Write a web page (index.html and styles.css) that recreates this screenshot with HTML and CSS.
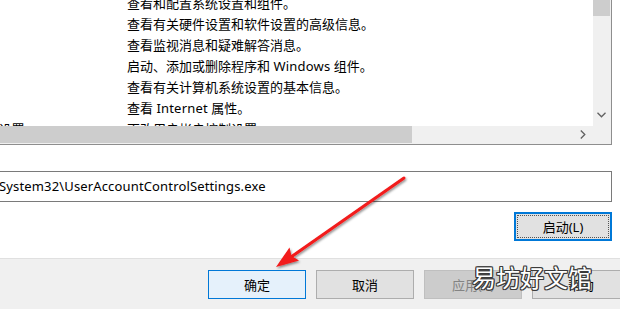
FILE: index.html
```html
<!DOCTYPE html>
<html lang="zh-CN">
<head>
<meta charset="utf-8">
<link rel="stylesheet" href="styles.css">
</head>
<body>
<div class="dialog">
  <div class="list">
    <div class="list-body">
      <div class="rows">
        <div class="row"><span class="c1"></span><span class="c2">查看和配置系统设置和组件。</span></div>
        <div class="row"><span class="c1"></span><span class="c2">查看有关硬件设置和软件设置的高级信息。</span></div>
        <div class="row"><span class="c1"></span><span class="c2">查看监视消息和疑难解答消息。</span></div>
        <div class="row"><span class="c1"></span><span class="c2">启动、添加或删除程序和 <span class="lat">Windows</span> 组件。</span></div>
        <div class="row"><span class="c1"></span><span class="c2">查看有关计算机系统设置的基本信息。</span></div>
        <div class="row"><span class="c1"></span><span class="c2">查看 <span class="lat">Internet</span> 属性。</span></div>
        <div class="row"><span class="c1"><span class="shift">更改 UAC 设置</span></span><span class="c2">更改用户帐户控制设置。</span></div>
      </div>
    </div>
    <div class="vscroll">
      <div class="vthumb"></div>
      <svg class="chev-down" width="9" height="6" viewBox="0 0 9 6"><polyline points="0.5,0.8 4.5,4.8 8.5,0.8" fill="none" stroke="#606060" stroke-width="1.3"/></svg>
    </div>
    <div class="hscroll">
      <div class="hthumb"></div>
      <svg class="chev-right" width="6" height="9" viewBox="0 0 6 9"><polyline points="0.8,0.5 4.8,4.5 0.8,8.5" fill="none" stroke="#606060" stroke-width="1.3"/></svg>
    </div>
    <div class="corner"></div>
  </div>

  <div class="command">System32\UserAccountControlSettings.exe</div>

  <div class="run-row">
    <button class="btn btn-focus"><span class="focus-ring">启动(L)</span></button>
  </div>

  <div class="footer">
    <button class="btn btn-default">确定</button>
    <button class="btn">取消</button>
    <button class="btn btn-disabled">应用(A)</button>
    <button class="btn btn-help">帮助</button>
  </div>

  <div class="watermark">易坊好文馆</div>

  <svg class="arrow" width="620" height="309" viewBox="0 0 620 309">
    <defs>
      <filter id="sh" x="-20%" y="-20%" width="140%" height="140%">
        <feDropShadow dx="1" dy="1.5" stdDeviation="1" flood-color="#000" flood-opacity="0.45"/>
      </filter>
    </defs>
    <g filter="url(#sh)">
      <line x1="404" y1="178" x2="291" y2="257" stroke="#f21a1a" stroke-width="3" stroke-linecap="round"/>
      <polygon points="276,267 289.5,247.5 291.5,256 299,260.5" fill="#f21a1a"/>
    </g>
  </svg>
</div>
</body>
</html>
```

FILE: styles.css
```css
html, body {
  margin: 0;
  padding: 0;
  background: #ffffff;
}

body {
  width: 620px;
  height: 309px;
  overflow: hidden;
  font-family: "Noto Sans", "Noto Sans CJK SC", sans-serif;
  font-size: 13px;
  color: #000;
}

.dialog {
  position: relative;
  width: 620px;
  height: 309px;
  display: flex;
  flex-direction: column;
}

.list {
  width: 611px;
  height: 144px;
  border-right: 1px solid #8e8e8e;
  border-bottom: 1px solid #8e8e8e;
  display: grid;
  grid-template-columns: 593px 18px;
  grid-template-rows: 126px 18px;
  background: #fff;
}

.list-body {
  overflow: hidden;
  position: relative;
}

.rows {
  margin-top: -7px;
}

.row {
  display: flex;
  height: 21px;
  line-height: 21px;
  white-space: nowrap;
}

.lat {
  letter-spacing: 0.2px;
}

.c1 {
  width: 127px;
  flex: none;
  overflow: hidden;
}

.shift {
  display: inline-block;
  margin-left: -60px;
}

.c2 {
  flex: none;
}

.vscroll {
  background: #f0f0f0;
  position: relative;
}

.vthumb {
  width: 17px;
  height: 16px;
  background: #cdcdcd;
}

.chev-down {
  position: absolute;
  left: 4px;
  top: 112px;
}

.hscroll {
  background: #f0f0f0;
  position: relative;
  display: flex;
}

.hthumb {
  width: 412px;
  height: 17px;
  background: #cdcdcd;
}

.chev-right {
  position: absolute;
  left: 580px;
  top: 4px;
}

.corner {
  background: #f0f0f0;
}

.command {
  margin-top: 26px;
  width: 611px;
  height: 29px;
  border: 1px solid #7a7a7a;
  border-left: none;
  line-height: 28px;
  padding-left: 0;
  text-indent: -1px;
  letter-spacing: 0.15px;
  white-space: nowrap;
}

.run-row {
  display: flex;
  justify-content: flex-end;
  padding-right: 8px;
  margin-top: 10px;
}

.btn {
  width: 98px;
  height: 29px;
  border: 1px solid #adadad;
  background: #e1e1e1;
  font-family: inherit;
  font-size: 13px;
  color: #000;
  padding: 0;
  margin: 0;
  display: flex;
  align-items: center;
  justify-content: center;
  flex: none;
}

.btn-focus {
  border: 2px solid #0078d7;
  padding: 1px;
}

.focus-ring {
  display: flex;
  align-items: center;
  justify-content: center;
  width: 100%;
  height: 100%;
  box-sizing: border-box;
  border: 1px dotted #555;
}

.footer {
  margin-top: 17px;
  flex: 1;
  background: #f0f0f0;
  border-top: 1px solid #e0e0e0;
  display: flex;
  gap: 10px;
  padding-left: 208px;
  padding-top: 11px;
  align-items: flex-start;
}

.btn-default {
  background: #e5f1fb;
  border-color: #0078d7;
}

.btn-disabled {
  background: #cccccc;
  border-color: #bfbfbf;
  color: #838383;
}

.watermark {
  position: absolute;
  left: 472px;
  top: 261px;
  font-family: "Noto Sans CJK SC", sans-serif;
  font-size: 24px;
  line-height: 32px;
  color: #fff;
  letter-spacing: 0;
  text-shadow:
    1px 0 0 #3a3a3a, -1px 0 0 #3a3a3a, 0 1px 0 #3a3a3a, 0 -1px 0 #3a3a3a,
    1px 1px 0 #3a3a3a, -1px -1px 0 #3a3a3a, 1px -1px 0 #3a3a3a, -1px 1px 0 #3a3a3a;
  white-space: nowrap;
}

.arrow {
  position: absolute;
  left: 0;
  top: 0;
  pointer-events: none;
}
```
